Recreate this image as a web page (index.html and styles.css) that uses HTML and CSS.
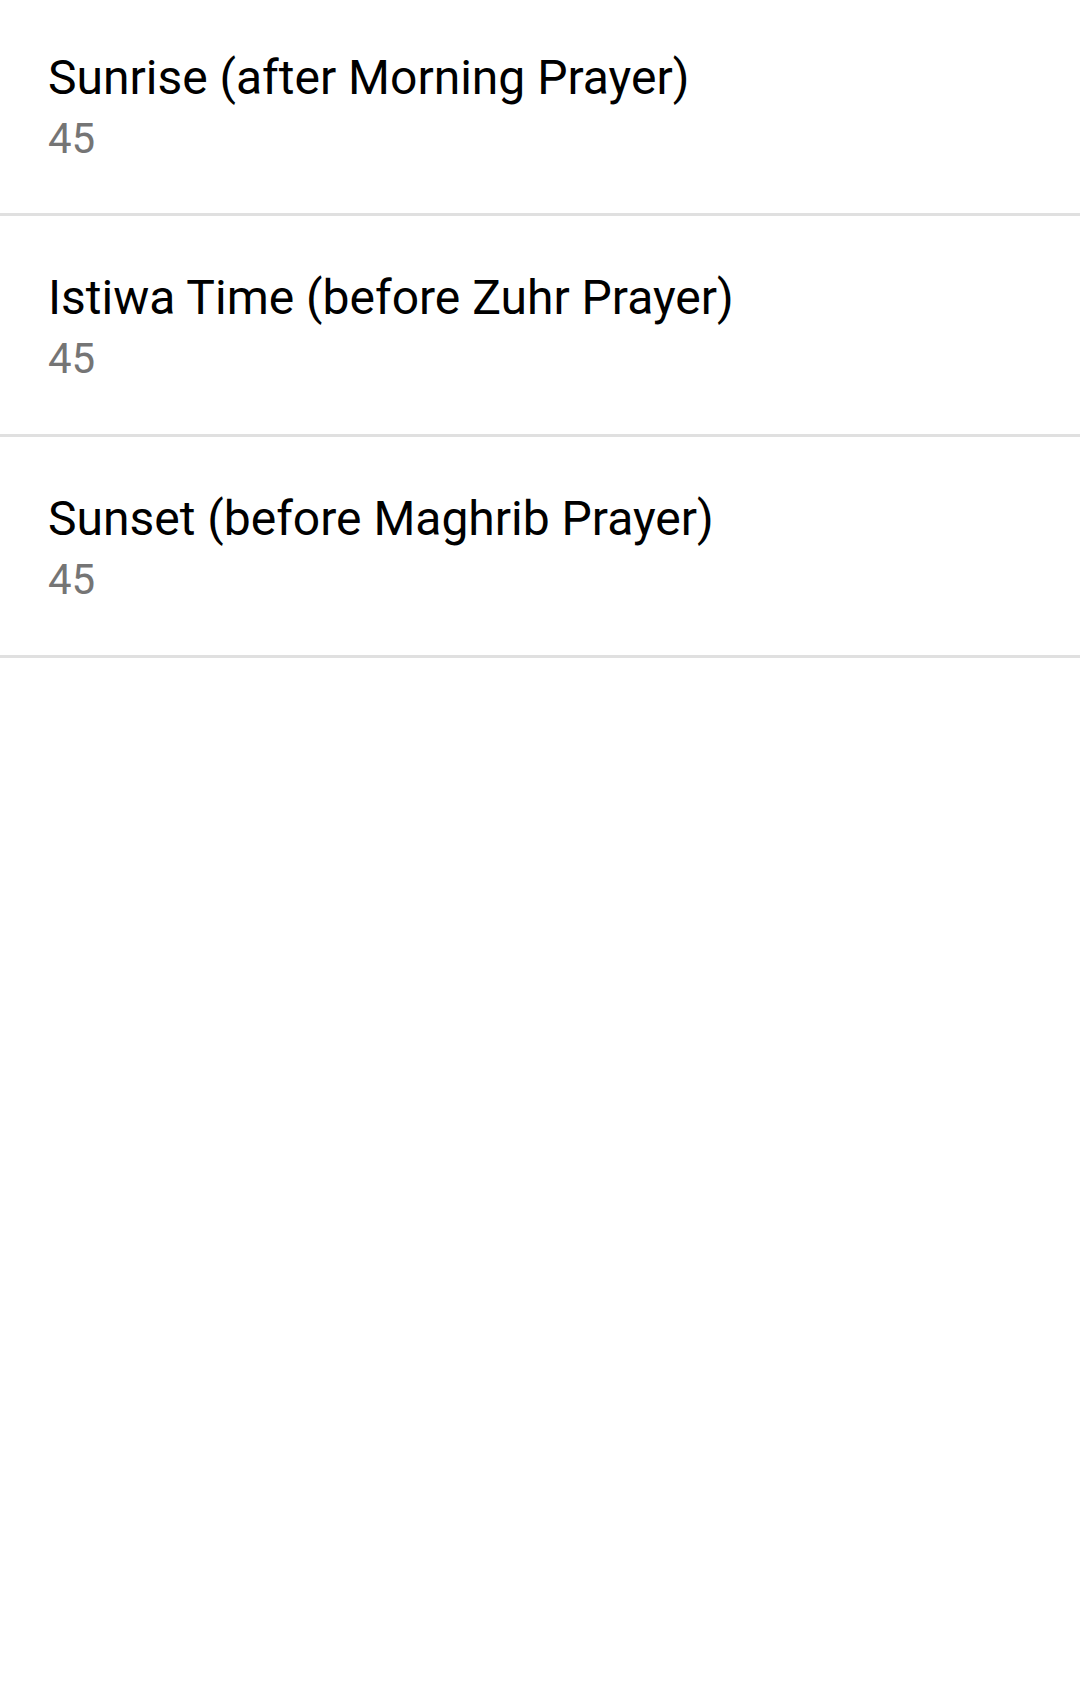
FILE: index.html
```html
<!DOCTYPE html>
<html>
<head>
<meta charset="utf-8">
<link rel="stylesheet" href="styles.css">
</head>
<body>
<div class="list">
  <div class="row">
    <div class="title">Sunrise (after Morning Prayer)</div>
    <div class="summary">45</div>
  </div>
  <div class="row">
    <div class="title">Istiwa Time (before Zuhr Prayer)</div>
    <div class="summary">45</div>
  </div>
  <div class="row">
    <div class="title">Sunset (before Maghrib Prayer)</div>
    <div class="summary">45</div>
  </div>
</div>
</body>
</html>
```
FILE: styles.css
```css
html, body {
  margin: 0;
  padding: 0;
  background: #ffffff;
}
body {
  width: 1080px;
  height: 1699px;
  font-family: Roboto, "Noto Sans", sans-serif;
}
.list {
  display: flex;
  flex-direction: column;
}
.row {
  padding: 54px 48px 51px;
  border-bottom: 3px solid #e0e0e0;
}
.row:first-child {
  padding-top: 50px;
  padding-bottom: 50px;
}
.title {
  font-size: 48px;
  line-height: 56px;
  color: #000000;
}
.summary {
  margin-top: 8px;
  font-size: 42px;
  line-height: 49px;
  color: #757575;
}
```
